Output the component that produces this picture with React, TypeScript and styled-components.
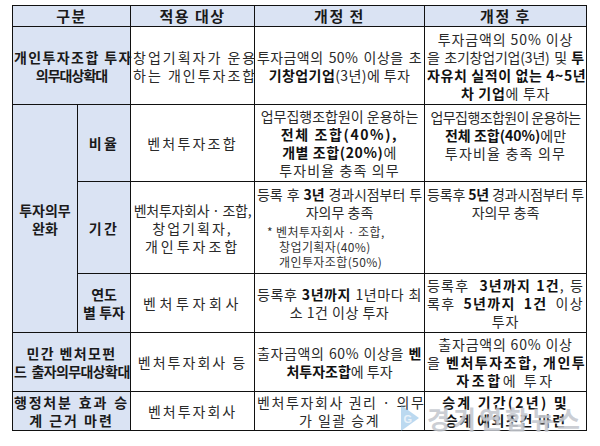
import styled, { createGlobalStyle } from 'styled-components';

const GlobalStyle = createGlobalStyle`
  html, body {
    margin: 0;
    padding: 0;
    background: #ffffff;
  }
  body {
    font-family: "Noto Sans CJK KR", "Noto Sans", sans-serif;
    color: #222;
  }
`;

const Page = styled.div`
  position: relative;
  width: 600px;
  height: 446px;
  padding: 5px 0 0 12px;
  box-sizing: border-box;
`;

const Table = styled.table`
  width: 574px;
  table-layout: fixed;
  border-collapse: collapse;
  font-size: 14px;
  line-height: 18px;
`;

const Row = styled.tr<{ $h: number }>`
  height: ${(p) => p.$h}px;
`;

const HeadCell = styled.th`
  background: #dae3f3;
  border: 1px solid #111;
  font-size: 15px;
  font-weight: 700;
  color: #1a1a1a;
  letter-spacing: 1.5px;
  padding: 0;
  text-align: center;
  vertical-align: middle;
`;

const LabelCell = styled.td`
  background: #dae3f3;
  border: 1px solid #111;
  font-weight: 700;
  color: #1a1a1a;
  padding: 0 1px;
  text-align: center;
  vertical-align: middle;
`;

const Cell = styled.td<{ $top?: boolean; $pt?: number }>`
  border: 1px solid #111;
  padding: ${(p) => (p.$pt ? `${p.$pt}px` : '0')} 2px 0;
  text-align: center;
  vertical-align: ${(p) => (p.$top ? 'top' : 'middle')};
  color: #2a2a2a;
`;

const Line = styled.span<{ $fill?: boolean; $ls?: number }>`
  display: block;
  white-space: nowrap;
  text-align: center;
  text-align-last: ${(p) => (p.$fill ? 'justify' : 'center')};
  letter-spacing: ${(p) => p.$ls ?? 0}px;
`;

const B = styled.b`
  font-weight: 700;
  color: #111;
`;

const Note = styled.div`
  margin-top: 3px;
  padding-left: 10px;
  font-size: 12px;
  line-height: 15px;
  letter-spacing: 0.4px;
  text-align: left;
  color: #333;
`;

const NoteLine = styled.span<{ $indent?: boolean }>`
  display: block;
  white-space: nowrap;
  padding-left: ${(p) => (p.$indent ? '12px' : '0')};
`;

const Watermark = styled.div`
  position: absolute;
  left: 399px;
  top: 403px;
  display: flex;
  align-items: center;
  gap: 6px;
  pointer-events: none;
`;

const MarkText = styled.span`
  font-family: "Noto Sans CJK KR", sans-serif;
  font-size: 25px;
  line-height: 28px;
  font-weight: 700;
  letter-spacing: 3px;
  color: rgba(168, 174, 184, 0.6);
  text-shadow: 0 0 2px rgba(255, 255, 255, 0.9);
`;

const MarkLogo = () => (
  <svg width="22" height="30" viewBox="0 0 22 30">
    <path d="M2 2 L20 15 L2 28 Z" fill="rgba(120, 180, 225, 0.5)" />
    <text x="4.5" y="19.5" fontSize="11" fontWeight="700" fill="rgba(235, 243, 250, 0.95)" fontFamily="Liberation Sans, sans-serif">
      G
    </text>
  </svg>
);

export default function App() {
  return (
    <>
      <GlobalStyle />
      <Page>
        <Table>
          <colgroup>
            <col style={{ width: 65 }} />
            <col style={{ width: 53 }} />
            <col style={{ width: 124 }} />
            <col style={{ width: 170 }} />
            <col style={{ width: 162 }} />
          </colgroup>
          <tbody>
            <Row $h={21}>
              <HeadCell colSpan={2}>구분</HeadCell>
              <HeadCell>적용 대상</HeadCell>
              <HeadCell>개정 전</HeadCell>
              <HeadCell>개정 후</HeadCell>
            </Row>
            <Row $h={78}>
              <LabelCell colSpan={2}>
                <Line $fill $ls={1.4}>개인투자조합 투자</Line>
                <Line $ls={-1}>의무대상확대</Line>
              </LabelCell>
              <Cell>
                <Line $fill $ls={2}>창업기획자가 운용</Line>
                <Line $fill $ls={2}>하는 개인투자조합</Line>
              </Cell>
              <Cell>
                <Line $fill $ls={0.4}>투자금액의 50% 이상을 초</Line>
                <Line $ls={0.4}>
                  <B>기창업기업</B>(3년)에 투자
                </Line>
              </Cell>
              <Cell>
                <Line $ls={0.9}>투자금액의 50% 이상</Line>
                <Line $fill $ls={-0.2}>
                  을 초기창업기업(3년) 및 <B>투</B>
                </Line>
                <Line $fill $ls={0.6}>
                  <B>자유치 실적이 없는 4~5년</B>
                </Line>
                <Line $ls={0.7}>
                  <B>차 기업</B>에 투자
                </Line>
              </Cell>
            </Row>
            <Row $h={77}>
              <LabelCell rowSpan={3}>
                <Line>투자의무</Line>
                <Line>완화</Line>
              </LabelCell>
              <LabelCell>
                <Line $ls={2.5}>비율</Line>
              </LabelCell>
              <Cell>
                <Line $ls={2.2}>벤처투자조합</Line>
              </Cell>
              <Cell>
                <Line>업무집행조합원이 운용하는</Line>
                <Line $ls={1.6}>
                  <B>전체 조합(40%),</B>
                </Line>
                <Line $ls={0.6}>
                  <B>개별 조합(20%)</B>에
                </Line>
                <Line $ls={1.1}>투자비율 충족 의무</Line>
              </Cell>
              <Cell $top $pt={3}>
                <Line $ls={-0.6}>업무집행조합원이 운용하는</Line>
                <Line>
                  <B>전체 조합(40%)</B>에만
                </Line>
                <Line $ls={1.2}>투자비율 충족 의무</Line>
              </Cell>
            </Row>
            <Row $h={92}>
              <LabelCell>
                <Line $ls={2.5}>기간</Line>
              </LabelCell>
              <Cell>
                <Line $ls={-0.3}>벤처투자회사 · 조합,</Line>
                <Line $ls={2}>창업기획자,</Line>
                <Line $ls={3}>개인투자조합</Line>
              </Cell>
              <Cell $top $pt={3}>
                <Line $fill $ls={-0.1}>
                  등록 후 <B>3년</B> 경과시점부터 투
                </Line>
                <Line>자의무 충족</Line>
                <Note>
                  <NoteLine>* 벤처투자회사 · 조합,</NoteLine>
                  <NoteLine $indent>창업기획자(40%)</NoteLine>
                  <NoteLine $indent>개인투자조합(50%)</NoteLine>
                </Note>
              </Cell>
              <Cell $top $pt={3}>
                <Line $fill $ls={-0.2}>
                  등록후 <B>5년</B> 경과시점부터 투
                </Line>
                <Line>자의무 충족</Line>
              </Cell>
            </Row>
            <Row $h={59}>
              <LabelCell>
                <Line>연도</Line>
                <Line>별 투자</Line>
              </LabelCell>
              <Cell>
                <Line $ls={3.6}>벤처투자회사</Line>
              </Cell>
              <Cell>
                <Line $fill $ls={0.6}>
                  등록후 <B>3년까지</B> 1년마다 최
                </Line>
                <Line $ls={0.5}>소 1건 이상 투자</Line>
              </Cell>
              <Cell>
                <Line $fill $ls={1.2}>
                  등록후&nbsp; <B>3년까지 1건</B>, 등
                </Line>
                <Line $fill $ls={1.4}>
                  록후 <B>5년까지 1건</B> 이상
                </Line>
                <Line $ls={1}>투자</Line>
              </Cell>
            </Row>
            <Row $h={59}>
              <LabelCell colSpan={2}>
                <Line $ls={1.4}>민간 벤처모펀</Line>
                <Line $ls={-0.6}>드&nbsp; 출자의무대상확대</Line>
              </LabelCell>
              <Cell>
                <Line $ls={2}>벤처투자회사 등</Line>
              </Cell>
              <Cell>
                <Line $fill $ls={0.6}>
                  출자금액의 60% 이상을 <B>벤</B>
                </Line>
                <Line>
                  <B>처투자조합</B>에 투자
                </Line>
              </Cell>
              <Cell>
                <Line $ls={0.8}>출자금액의 60% 이상</Line>
                <Line $fill $ls={1.5}>
                  을 <B>벤처투자조합, 개인투</B>
                </Line>
                <Line $ls={2.6}>
                  <B>자조합</B>에 투자
                </Line>
              </Cell>
            </Row>
            <Row $h={39}>
              <LabelCell colSpan={2}>
                <Line $fill $ls={1.8}>행정처분 효과 승</Line>
                <Line $ls={2}>계 근거 마련</Line>
              </LabelCell>
              <Cell>
                <Line $ls={2}>벤처투자회사</Line>
              </Cell>
              <Cell>
                <Line $fill $ls={1.6}>벤처투자회사 권리 · 의무</Line>
                <Line $ls={1.5}>가 일괄 승계</Line>
              </Cell>
              <Cell>
                <Line $ls={2.2}>
                  <B>승계 기간(2년) 및</B>
                </Line>
                <Line $ls={1.2}>
                  <B>승계 예외조건 마련</B>
                </Line>
              </Cell>
            </Row>
          </tbody>
        </Table>
        <Watermark>
          <MarkLogo />
          <MarkText>경기연합뉴스</MarkText>
        </Watermark>
      </Page>
    </>
  );
}
